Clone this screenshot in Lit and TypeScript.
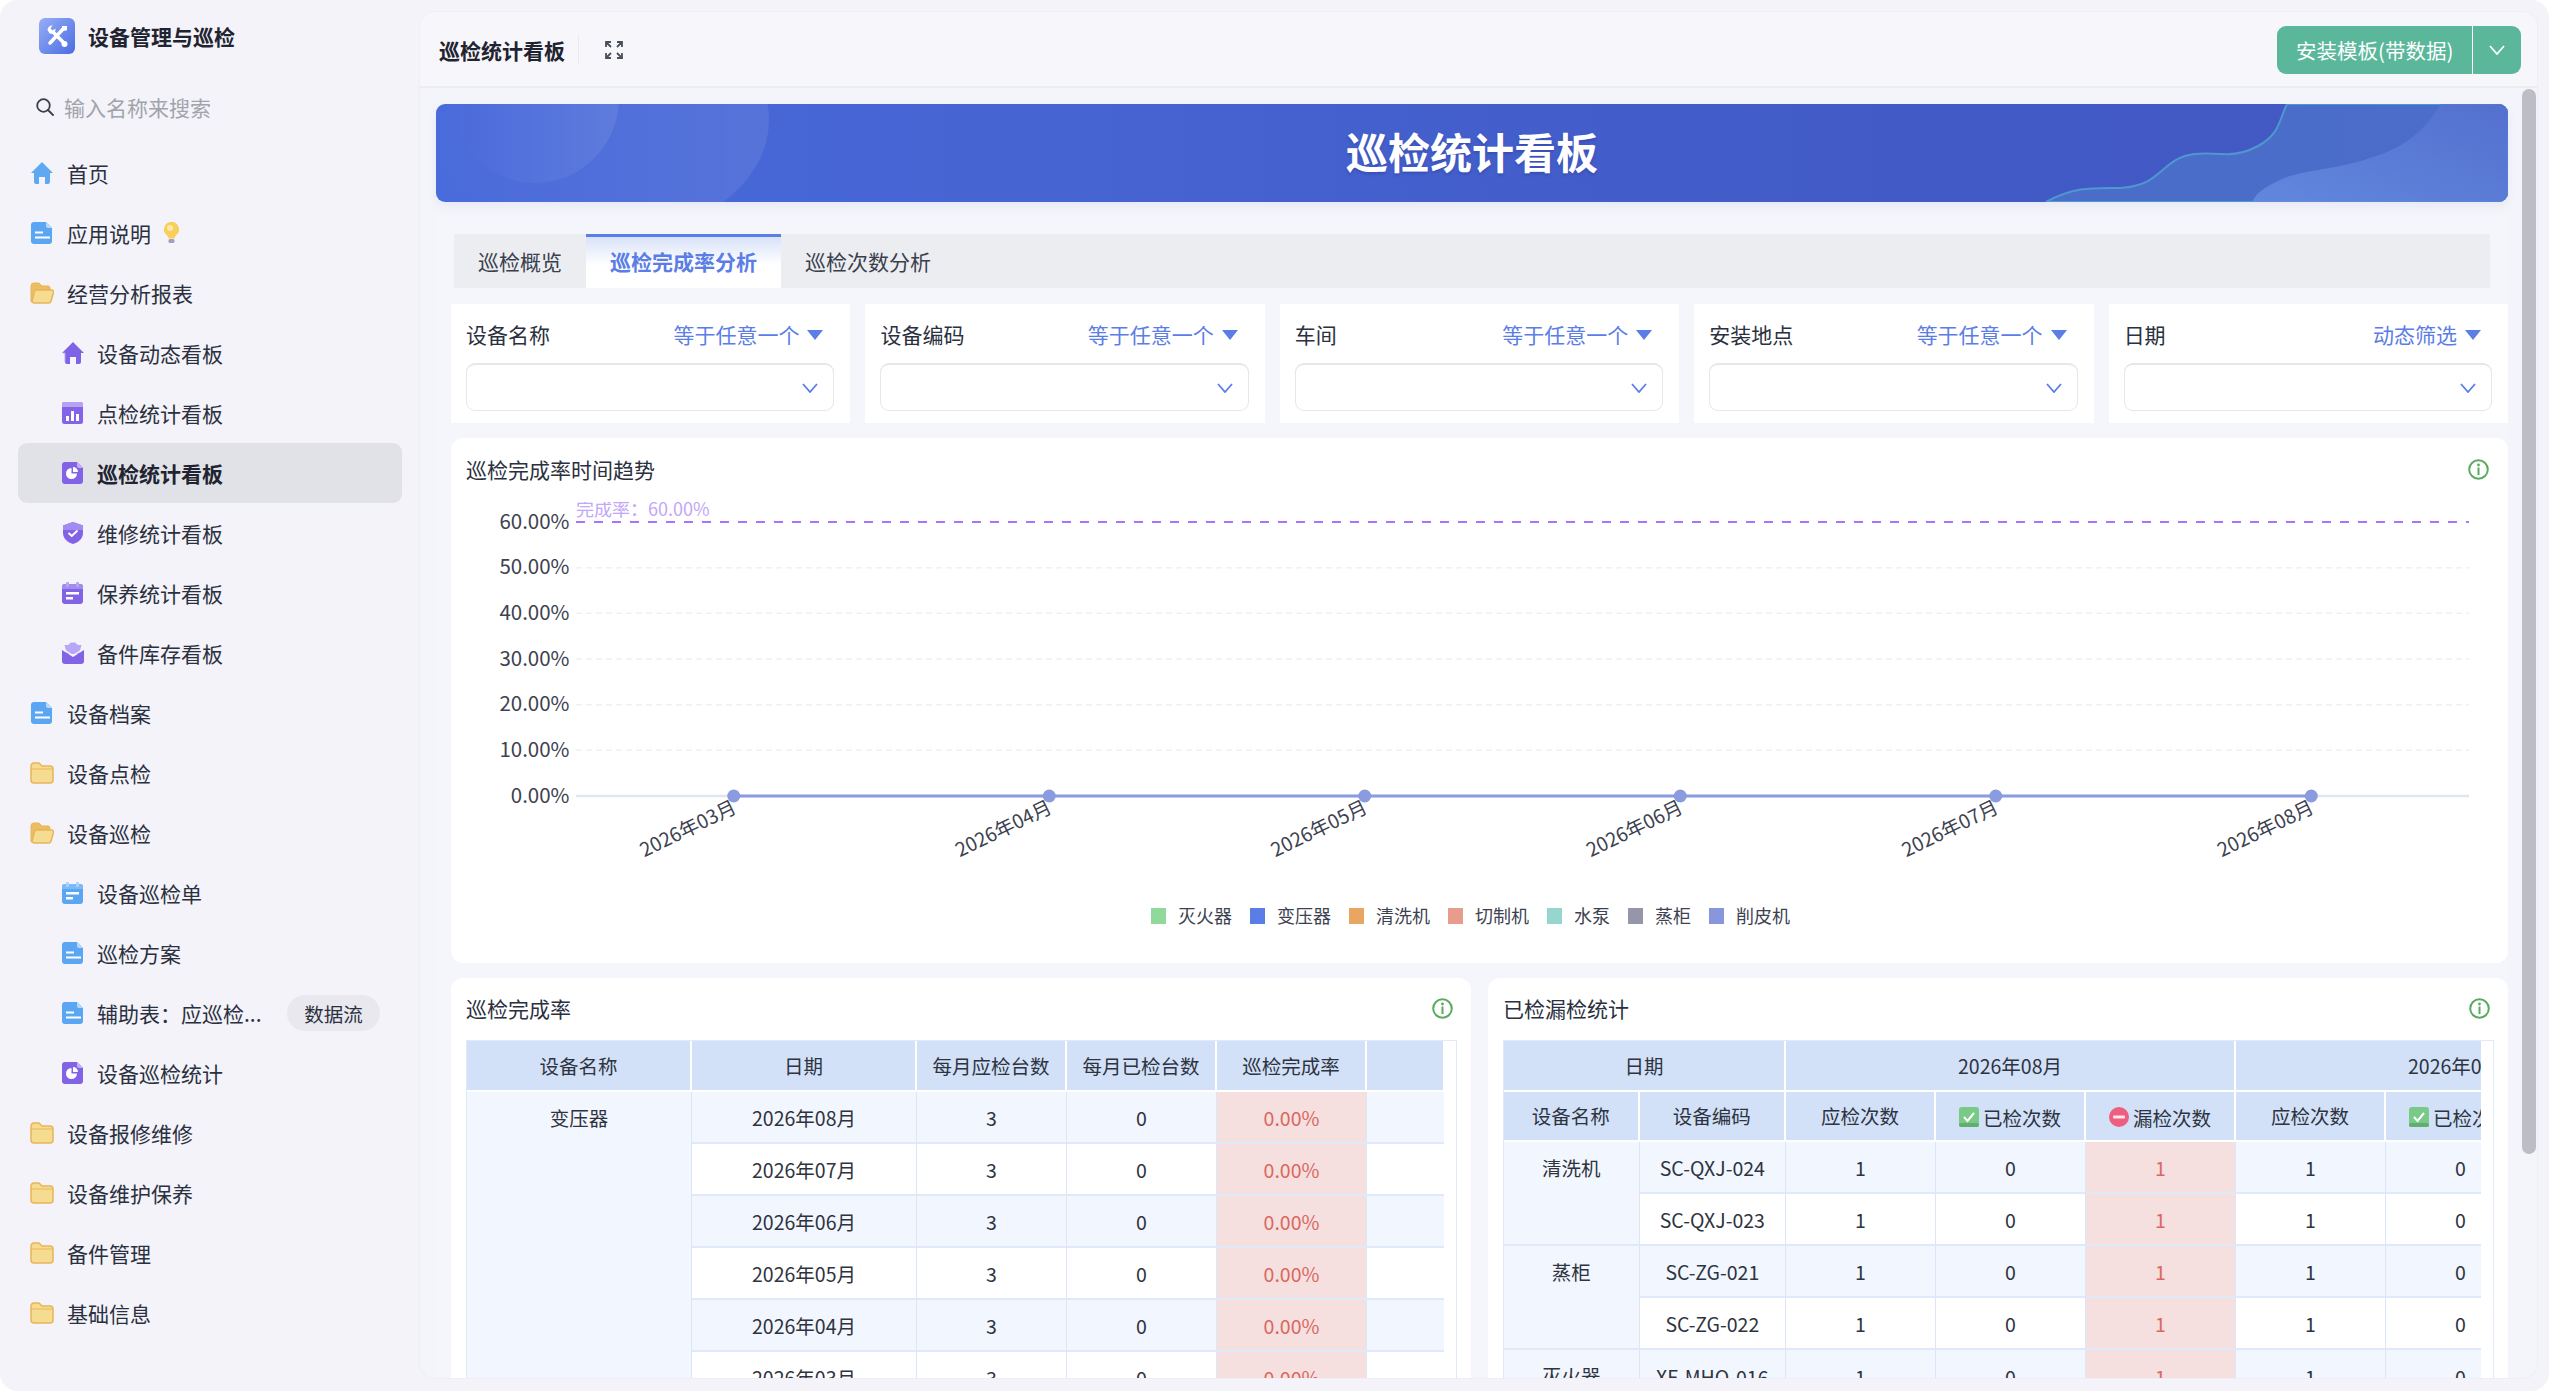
import { LitElement, html, css, svg } from "lit";
import { customElement } from "lit/decorators.js";

const doc = (a: string, b: string, fold: string) => html`<svg class="ic" viewBox="0 0 22 22"><path d="M3 0h12l6 6v13a3 3 0 0 1-3 3H3a3 3 0 0 1-3-3V3a3 3 0 0 1 3-3z" fill="${a}"/><path d="M15 0l6 6h-4a2 2 0 0 1-2-2z" fill="${fold}"/><rect x="4" y="9.500" width="8" height="2" fill="#fff"/><rect x="4" y="14.500" width="15" height="2" fill="#fff"/></svg>`;
const icons: Record<string, any> = {
  home: html`<svg class="ic" viewBox="0 0 22 22"><path d="M11 0l11 11h-3v9a2 2 0 0 1-2 2h-3v-7H8v7H5a2 2 0 0 1-2-2v-9H0z" fill="#5fa9f3"/></svg>`,
  phome: html`<svg class="ic" viewBox="0 0 22 22"><path d="M11 0l11 11h-3v9a2 2 0 0 1-2 2h-3v-7H8v7H5a2 2 0 0 1-2-2v-9H0z" fill="#7f62e6"/><path d="M3 20v-9H1" stroke="#b9a6f5" fill="none"/></svg>`,
  doc: doc("#5ba6f2", "", "#b7d8fa"),
  folder: html`<svg class="ic fold" viewBox="0 0 24 22"><path d="M1 4a3 3 0 0 1 3-3h5l3 3h8a3 3 0 0 1 3 3v11a3 3 0 0 1-3 3H4a3 3 0 0 1-3-3z" fill="#f6dc91" stroke="#e8b55a" stroke-width="1.500"/><path d="M1 7h22" stroke="#e8b55a" stroke-width="1"/></svg>`,
  open: html`<svg class="ic fold" viewBox="0 0 24 22"><path d="M1 4a3 3 0 0 1 3-3h5l3 3h6a2 2 0 0 1 2 2v2H7a2 2 0 0 0-2 1.500L2.500 20.500A2 2 0 0 1 1 18z" fill="#edbd62" stroke="#e8b55a" stroke-width="1"/><path d="M6 8h15.500a2 2 0 0 1 2 2.500l-2.500 8.500a2.500 2.500 0 0 1-2.500 2H4a2 2 0 0 1-1.800-2.500L4.500 9.500A2 2 0 0 1 6 8z" fill="#f6dc91" stroke="#e8b55a" stroke-width="1.500"/></svg>`,
  bars: html`<svg class="ic" viewBox="0 0 22 22"><rect width="21" height="22" rx="2.500" fill="#8364e6"/><path d="M0 5V2.500A2.500 2.500 0 0 1 2.500 0h16A2.500 2.500 0 0 1 21 2.500V5z" fill="#b7a3f4"/><rect x="4" y="14" width="3" height="5" fill="#fff"/><rect x="9" y="9" width="3" height="10" fill="#fff"/><rect x="14" y="12" width="3" height="7" fill="#fff"/></svg>`,
  pie: html`<svg class="ic" viewBox="0 0 22 22"><path d="M3 0h12l6 6v13a3 3 0 0 1-3 3H3a3 3 0 0 1-3-3V3a3 3 0 0 1 3-3z" fill="#8263e6"/><path d="M15 0l6 6h-4a2 2 0 0 1-2-2z" fill="#c0aef6"/><path d="M9.500 6a5.500 5.500 0 1 0 5.500 5.500H9.500z" fill="#fff"/><path d="M11 5v5h5a5 5 0 0 0-5-5z" fill="#fff"/></svg>`,
  shield: html`<svg class="ic" viewBox="0 0 22 22"><path d="M11 0l10 3.500V11c0 5.500-4.500 9.500-10 11C5.500 20.500 1 16.500 1 11V3.500z" fill="#8263e6"/><path d="M11 0l10 3.500V8H1V3.500z" fill="#a18bf0"/><path d="M6.500 11l3.300 3 5.700-5.500" fill="none" stroke="#fff" stroke-width="2"/></svg>`,
  cal: html`<svg class="ic" viewBox="0 0 22 22"><rect x="0" y="2" width="21" height="20" rx="3" fill="#8263e6"/><path d="M0 7V5a3 3 0 0 1 3-3h15a3 3 0 0 1 3 3v2z" fill="#a18bf0"/><rect x="4" y="0" width="3" height="5" rx="1" fill="#b7a3f4"/><rect x="14" y="0" width="3" height="5" rx="1" fill="#b7a3f4"/><rect x="4" y="10" width="13" height="2.500" fill="#fff"/><rect x="4" y="15" width="7" height="2.500" fill="#fff"/></svg>`,
  bcal: html`<svg class="ic" viewBox="0 0 22 22"><rect x="0" y="2" width="21" height="20" rx="3" fill="#5ba6f2"/><path d="M0 7V5a3 3 0 0 1 3-3h15a3 3 0 0 1 3 3v2z" fill="#7bbaf6"/><rect x="4" y="0" width="3" height="5" rx="1" fill="#a8d2fa"/><rect x="14" y="0" width="3" height="5" rx="1" fill="#a8d2fa"/><rect x="4" y="10" width="13" height="2.500" fill="#fff"/><rect x="4" y="15" width="7" height="2.500" fill="#fff"/></svg>`,
  box: html`<svg class="ic" viewBox="0 0 22 22"><path d="M6 3l3-2.500h4L16 3h3.500L17 12H5L2.500 3z" fill="#b9a6f6"/><path d="M0 8l11 7 11-7v11a3 3 0 0 1-3 3H3a3 3 0 0 1-3-3z" fill="#8263e6"/><path d="M0 6.500l11 7 11-7" fill="none" stroke="#f3f3f9" stroke-width="1.200"/></svg>`,
};
const chevron = (c: string) => html`<svg class="chev" viewBox="0 0 16 10"><path d="M1 1l7 8 7-8" fill="none" stroke="${c}" stroke-width="1.800"/></svg>`;
const info = html`<svg class="info" viewBox="0 0 21 21"><circle cx="10.500" cy="10.500" r="9.300" fill="none" stroke="#5bab5f" stroke-width="2"/><circle cx="10.500" cy="6" r="1.400" fill="#5bab5f"/><rect x="9.500" y="8.500" width="2" height="7.500" fill="#5bab5f"/></svg>`;
const okIcon = html`<svg class="flag" viewBox="0 0 20 20"><rect width="20" height="20" rx="3" fill="#79c987"/><rect y="16" width="20" height="4" rx="2" fill="#62ad70"/><path d="M5 10l3.500 4L15 6" fill="none" stroke="#fff" stroke-width="2"/></svg>`;
const noIcon = html`<svg class="flag" viewBox="0 0 20 20"><circle cx="10" cy="10" r="10" fill="#ee5e80"/><rect x="4" y="8.500" width="12" height="3" rx="1" fill="#fbe6ea"/></svg>`;

type Item = { t: string; i: string; l?: number; active?: boolean; bulb?: boolean; badge?: string };
const NAV: Item[] = [
  { t: "首页", i: "home" },
  { t: "应用说明", i: "doc", bulb: true },
  { t: "经营分析报表", i: "open" },
  { t: "设备动态看板", i: "phome", l: 1 },
  { t: "点检统计看板", i: "bars", l: 1 },
  { t: "巡检统计看板", i: "pie", l: 1, active: true },
  { t: "维修统计看板", i: "shield", l: 1 },
  { t: "保养统计看板", i: "cal", l: 1 },
  { t: "备件库存看板", i: "box", l: 1 },
  { t: "设备档案", i: "doc" },
  { t: "设备点检", i: "folder" },
  { t: "设备巡检", i: "open" },
  { t: "设备巡检单", i: "bcal", l: 1 },
  { t: "巡检方案", i: "doc", l: 1 },
  { t: "辅助表：应巡检...", i: "doc", l: 1, badge: "数据流" },
  { t: "设备巡检统计", i: "pie", l: 1 },
  { t: "设备报修维修", i: "folder" },
  { t: "设备维护保养", i: "folder" },
  { t: "备件管理", i: "folder" },
  { t: "基础信息", i: "folder" },
];
const FILTERS = [
  ["设备名称", "等于任意一个"],
  ["设备编码", "等于任意一个"],
  ["车间", "等于任意一个"],
  ["安装地点", "等于任意一个"],
  ["日期", "动态筛选"],
];
const LEGEND = [
  ["灭火器", "#91d99a"], ["变压器", "#5a7de6"], ["清洗机", "#e9a662"], ["切制机", "#e89c8e"],
  ["水泵", "#96d6ce"], ["蒸柜", "#9696aa"], ["削皮机", "#8896dc"],
];
const MONTHS = ["2026年03月", "2026年04月", "2026年05月", "2026年06月", "2026年07月", "2026年08月"];
const YS = [60, 50, 40, 30, 20, 10, 0];
const yOf = (v: number) => 796 - (v / 60) * 274;
const xOf = (i: number) => 733.75 + i * 315.5;

const chart = () => {
  let lx = 1151;
  const legend = LEGEND.map(([n, c]) => {
    const x = lx;
    lx += 27 + n.length * 18 + 18;
    return svg`<rect x=${x} y="908" width="15" height="16" fill=${c}></rect><text x=${x + 27} y="922.500" class="t">${n}</text>`;
  });
  return svg`
  ${YS.map((v) => svg`<text x="569.500" y=${yOf(v) + 6.5} text-anchor="end" class="a">${v.toFixed(2)}%</text>`)}
  ${YS.slice(1, 6).map((v) => svg`<line x1="576" x2="2469" y1=${yOf(v)} y2=${yOf(v)} stroke="#eef0f3" stroke-width="1.500" stroke-dasharray="6 4"></line>`)}
  <line x1="576" x2="2469" y1="796" y2="796" stroke="#e0e6f1" stroke-width="2.500"></line>
  <line x1="576" x2="2469" y1="522" y2="522" stroke="#8a45ff" stroke-width="1.500" stroke-dasharray="9 9"></line>
  <text x="576" y="516" class="m">完成率：60.00%</text>
  <line x1=${xOf(0)} x2=${xOf(5)} y1="796" y2="796" stroke="#8a9bdf" stroke-width="3"></line>
  ${MONTHS.map((m, i) => svg`<circle cx=${xOf(i)} cy="796" r="6.500" fill="#8a9bdf"></circle>
    <text transform="translate(${xOf(i) + 4} 812) rotate(-26)" text-anchor="end" class="x">${m}</text>`)}
  ${legend}`;
};

const L_COLS = [225, 225, 150, 150, 150, 78];
const R_COLS = [135.6, 146.4, 150, 150, 150, 150, 150, 150];
const L_ROWS = ["2026年08月", "2026年07月", "2026年06月", "2026年05月", "2026年04月", "2026年03月"];
const R_ROWS: [string | null, number, string][] = [
  ["清洗机", 2, "SC-QXJ-024"], [null, 0, "SC-QXJ-023"], ["蒸柜", 2, "SC-ZG-021"], [null, 0, "SC-ZG-022"], ["灭火器", 2, "XF-MHQ-016"],
];

@customElement("app-root")
export class AppRoot extends LitElement {
  static styles = css`
    :host { display: block; width: 100%; height: 100vh; overflow: hidden; background: #fff; font-family: "Noto Sans CJK SC", "Noto Sans", sans-serif; color: #2b3040; font-size: 21px; }
    .app { display: flex; height: 100%; background: #f3f3f9; border-radius: 18px; overflow: hidden; }
    .side { flex: none; width: 420px; display: flex; flex-direction: column; }
    .brand { display: flex; align-items: center; gap: 13px; height: 36px; margin: 18px 0 0 39px; font-weight: 600; color: #1f2430; }
    .logo { width: 36px; height: 36px; display: block; }
    .search { display: flex; align-items: center; gap: 10px; height: 30px; margin: 38px 0 21px 36px; color: #a2a3ab; }
    .search svg { width: 18px; height: 18px; flex: none; }
    .row { display: flex; align-items: center; height: 60px; margin-left: 18px; width: 384px; padding-left: 12px; box-sizing: border-box; border-radius: 9px; white-space: nowrap; flex: none; }
    .row.sub { padding-left: 43px; }
    .row.active { background: #e1e2e8; font-weight: 600; color: #1f2430; }
    .ic { width: 22px; height: 22px; flex: none; margin: 0 14px 0 1px; display: block; }
    .row.sub .ic { margin-right: 13px; }
    .ic.fold { width: 24px; margin: 0 13px 0 0; }
    .bulb { width: 15px; height: 22px; margin-left: 13px; }
    .badge { margin: 0 22px 0 auto; height: 36px; width: 93px; border-radius: 18px; background: #e8e8ee; display: flex; align-items: center; justify-content: center; font-size: 19.500px; }
    .main { flex: 1; min-width: 0; margin: 12px 12px 13px 0; border-radius: 15px; background: #f4f5fa; position: relative; overflow: hidden; display: flex; flex-direction: column; box-shadow: 0 0 0 1px #eeeef4; }
    .top { flex: none; height: 76px; box-sizing: border-box; display: flex; align-items: center; padding: 2px 16px 0 19px; background: #f7f7fb; border-bottom: 2px solid #ececf1; }
    .top h1 { margin: 0; font-size: 21px; font-weight: 600; color: #1f2430; }
    .vline { width: 1px; height: 30px; background: #eaeaf0; margin-left: 13px; }
    .fs { width: 18px; height: 18px; margin-left: 26px; }
    .grow { flex: 1; }
    .btn { display: flex; height: 48px; width: 244px; background: #5ab79a; border-radius: 9px; color: #fff; align-items: center; }
    .btn .a { width: 196px; box-sizing: border-box; padding-left: 19px; border-right: 1px solid #fff; height: 100%; display: flex; align-items: center; }
    .btn .b { flex: 1; display: flex; justify-content: center; }
    .chev { width: 16px; height: 10px; display: block; }
    .scroll { flex: 1; min-height: 0; overflow: hidden; padding: 16px 29px 0 16px; display: flex; flex-direction: column; }
    .banner { flex: none; height: 98px; border-radius: 9px; position: relative; overflow: hidden; background: linear-gradient(90deg, #4a6bdb, #415ac6 70%, #4459c3); display: flex; align-items: center; justify-content: center; color: #fff; font-size: 42px; font-weight: 700; box-shadow: 0 4px 10px rgba(70, 90, 190, 0.08); }
    .banner svg { position: absolute; left: 0; top: 0; width: 2072px; height: 98px; }
    .banner span { position: relative; margin-bottom: 6px; text-shadow: 0 2px 3px rgba(30, 40, 120, 0.3); }
    .body { flex: 1; min-height: 0; margin-top: 15px; padding: 17px 0 0 15px; display: flex; flex-direction: column; background: #f5f6fb; }
    .tabs { flex: none; display: flex; height: 54px; margin: 0 18px 16px 3px; background: #ecedf1; }
    .tab { padding: 0 24px; display: flex; align-items: center; color: #3a3f4d; }
    .tab.on { color: #5a7de6; font-weight: 600; border-top: 3px solid #5a7de6; box-sizing: border-box; padding-bottom: 3px; background: linear-gradient(180deg, #d8e2f8, #fff 55%); }
    .filters { flex: none; display: flex; gap: 15px; }
    .f { flex: 1; height: 119px; background: #fff; padding: 14px 16px 0 15px; box-sizing: border-box; }
    .f .l { display: flex; align-items: center; justify-content: space-between; height: 32px; margin-bottom: 13px; padding-right: 11px; }
    .op { display: flex; align-items: center; gap: 8px; color: #5a7de6; }
    .tri { width: 0; height: 0; margin-top: 2px; border-left: 8px solid transparent; border-right: 8px solid transparent; border-top: 10px solid #5a7de6; }
    .sel { height: 48px; border: 1px solid #e6e6eb; border-top-width: 2px; border-radius: 9px; box-sizing: border-box; display: flex; align-items: center; justify-content: flex-end; padding-right: 15px; }
    .card { background: #fff; border-radius: 12px; }
    .cardhead { display: flex; align-items: center; justify-content: space-between; padding: 0 18.500px 0 15px; }
    .cardhead span { margin-bottom: 2px; }
    .info { width: 21px; height: 21px; display: block; margin-bottom: 2px; }
    .chart { flex: none; margin-top: 15px; height: 525px; }
    .chart .cardhead { height: 64px; padding-right: 19px; }
    .chart svg.plot { display: block; width: 2057px; height: 461px; }
    .t { font-size: 18px; fill: #3d4250; font-family: "Noto Sans CJK SC", sans-serif; }
    .a { font-size: 20.500px; fill: #3d4250; font-family: "Noto Sans CJK SC", sans-serif; }
    .x { font-size: 19.500px; fill: #3d4250; font-family: "Noto Sans CJK SC", sans-serif; }
    .m { font-size: 18px; fill: #c2a6f7; font-family: "Noto Sans CJK SC", sans-serif; }
    .lower { flex: 1; min-height: 0; margin-top: 15px; display: flex; gap: 17px; }
    .lc { flex: 1; min-width: 0; display: flex; flex-direction: column; border-radius: 12px 12px 0 0; overflow: hidden; }
    .lc .cardhead { flex: none; height: 62px; }
    .tw { flex: 1; min-height: 0; margin: 0 14px 0 15px; border: 1px solid #e1eaf8; border-bottom: 0; padding-right: 12px; }
    .tc { height: 100%; overflow: hidden; }
    table { border-collapse: separate; border-spacing: 0; table-layout: fixed; font-size: 19.500px; color: #2e3340; text-align: center; }
    th { height: 51px; padding: 0 0 1px; font-weight: 400; background: #d2e1f8; border-right: 2px solid #fff; border-bottom: 2px solid #fff; box-sizing: border-box; white-space: nowrap; }
    tr.h2 th { height: 50px; }
    td { height: 52px; padding: 0; border-right: 1px solid #dbe7f7; border-bottom: 2px solid #dfe9f9; box-sizing: border-box; white-space: nowrap; background: #fff; }
    tr.z td { background: #f2f6fe; }
    td.name { background: #f2f6fe; vertical-align: top; line-height: 52px; }
    td.bad, tr.z td.bad { background: #f5dfdf; color: #d9685e; }
    .ico { display: inline-flex; align-items: center; gap: 4px; vertical-align: middle; }
    .flag { width: 20px; height: 20px; display: block; flex: none; }
    .thumb { position: absolute; right: 1px; top: 77px; width: 14px; height: 1065px; border-radius: 7px; background: #bcbdc5; }
  `;

  render() {
    return html`<div class="app">
      <aside class="side">
        <div class="brand">
          <svg class="logo" viewBox="0 0 36 36"><defs><linearGradient id="lg" x1="0" y1="0" x2="1" y2="1"><stop offset="0" stop-color="#96aef7"/><stop offset="1" stop-color="#4c6ce2"/></linearGradient></defs><rect width="36" height="36" rx="6" fill="url(#lg)"/><path d="M11 25l14-15M25 25L14 14" stroke="#fff" stroke-width="3.500" stroke-linecap="round"/><path d="M8.500 12a4.500 4.500 0 0 1 5-4.500l-2 3 2 2 3-2a4.500 4.500 0 0 1-6 5z" fill="#fff"/><path d="M23 8h5v4l-2 1-3-3z" fill="#fff"/><circle cx="25.500" cy="26" r="3" fill="#fff"/></svg>
          <span>设备管理与巡检</span>
        </div>
        <div class="search">
          <svg viewBox="0 0 18 18"><circle cx="7.500" cy="7.500" r="6.300" fill="none" stroke="#3c3f4a" stroke-width="1.800"/><path d="M12 12l5 5" stroke="#3c3f4a" stroke-width="1.800" stroke-linecap="round"/></svg>
          <span>输入名称来搜索</span>
        </div>
        ${NAV.map((n) => html`<div class="row ${n.l ? "sub" : ""} ${n.active ? "active" : ""}">
          ${icons[n.i]}<span>${n.t}</span>
          ${n.bulb ? html`<svg class="bulb" viewBox="0 0 15 22"><path d="M7.500 0a7.500 7.500 0 0 1 4.500 13.500c-1 1-1.500 2-1.500 3h-6c0-1-.5-2-1.500-3A7.500 7.500 0 0 1 7.500 0z" fill="#f8cf5c"/><circle cx="6" cy="6" r="3" fill="#fde9a6"/><rect x="4.500" y="17" width="6" height="4" rx="1.500" fill="#a99ac0"/></svg>` : ""}
          ${n.badge ? html`<span class="badge">${n.badge}</span>` : ""}
        </div>`)}
      </aside>
      <main class="main">
        <header class="top">
          <h1>巡检统计看板</h1>
          <i class="vline"></i>
          <svg class="fs" viewBox="0 0 18 18" fill="none" stroke="#4a4f5a" stroke-width="1.800"><path d="M1 6V1h5M1 1l5 5M12 1h5v5M17 1l-5 5M1 12v5h5M1 17l5-5M17 12v5h-5M17 17l-5-5"/></svg>
          <div class="grow"></div>
          <div class="btn"><div class="a">安装模板(带数据)</div><div class="b">${chevron("#fff")}</div></div>
        </header>
        <div class="scroll">
          <div class="banner">
            <svg viewBox="436 104 2072 98">
              <defs>
                <linearGradient id="c1" x1="0" x2="1"><stop offset="0" stop-color="#fff" stop-opacity="0"/><stop offset="1" stop-color="#fff" stop-opacity="0.08"/></linearGradient>
                <linearGradient id="w2" x1="0" y1="1" x2="1" y2="0"><stop offset="0" stop-color="#658ce0"/><stop offset="1" stop-color="#5570d0"/></linearGradient>
              </defs>
              <ellipse cx="535" cy="98" rx="84" ry="85" fill="url(#c1)"/>
              <ellipse cx="600" cy="120" rx="169" ry="120" fill="url(#c1)"/>
              <path d="M2287 104C2279 120 2280 134 2258 146C2245 153 2235 155 2223 154C2200 153 2185 152 2170 164C2155 175 2150 186 2120 188C2095 188 2075 186 2046 202L2508 202V104Z" fill="#5f9cd8" fill-opacity="0.3" stroke="#4f97cf" stroke-width="2"/>
              <path d="M2441 104C2425 130 2405 148 2370 158C2335 170 2300 170 2280 180C2265 187 2257 192 2252 202L2508 202V104Z" fill="url(#w2)" fill-opacity="0.85"/>
            </svg>
            <span>巡检统计看板</span>
          </div>
          <div class="body">
            <div class="tabs">
              <div class="tab">巡检概览</div>
              <div class="tab on">巡检完成率分析</div>
              <div class="tab">巡检次数分析</div>
            </div>
            <div class="filters">
              ${FILTERS.map(([a, b]) => html`<div class="f"><div class="l"><span>${a}</span><span class="op">${b}<i class="tri"></i></span></div><div class="sel">${chevron("#5a7de6")}</div></div>`)}
            </div>
            <section class="card chart">
              <div class="cardhead"><span>巡检完成率时间趋势</span>${info}</div>
              <svg class="plot" viewBox="451 502 2057 461">${chart()}</svg>
            </section>
            <div class="lower">
              <section class="card lc">
                <div class="cardhead"><span>巡检完成率</span>${info}</div>
                <div class="tw"><div class="tc">
                  <table style="width:${L_COLS.reduce((a, b) => a + b, 0)}px">
                    <colgroup>${L_COLS.map((w) => html`<col style="width:${w}px">`)}</colgroup>
                    <tr>${["设备名称", "日期", "每月应检台数", "每月已检台数", "巡检完成率", ""].map((h) => html`<th>${h}</th>`)}</tr>
                    ${L_ROWS.map((d, i) => html`<tr class="${i % 2 ? "" : "z"}">
                      ${i === 0 ? html`<td class="name" rowspan="6">变压器</td>` : ""}
                      <td>${d}</td><td>3</td><td>0</td><td class="bad">0.00%</td><td></td></tr>`)}
                  </table>
                </div></div>
              </section>
              <section class="card lc">
                <div class="cardhead"><span>已检漏检统计</span>${info}</div>
                <div class="tw"><div class="tc">
                  <table style="width:${R_COLS.reduce((a, b) => a + b, 0)}px">
                    <colgroup>${R_COLS.map((w) => html`<col style="width:${w}px">`)}</colgroup>
                    <tr><th colspan="2">日期</th><th colspan="3">2026年08月</th><th colspan="3">2026年07月</th></tr>
                    <tr class="h2"><th>设备名称</th><th>设备编码</th>
                      ${[0, 1].map(() => html`<th>应检次数</th><th><span class="ico">${okIcon}已检次数</span></th><th><span class="ico">${noIcon}漏检次数</span></th>`)}
                    </tr>
                    ${R_ROWS.map(([n, s, c], i) => html`<tr class="${i % 2 ? "" : "z"}">
                      ${n ? html`<td class="name" rowspan="${s}">${n}</td>` : ""}
                      <td>${c}</td>
                      ${[0, 1].map(() => html`<td>1</td><td>0</td><td class="bad">1</td>`)}
                    </tr>`)}
                  </table>
                </div></div>
              </section>
            </div>
          </div>
        </div>
        <div class="thumb"></div>
      </main>
    </div>`;
  }
}
